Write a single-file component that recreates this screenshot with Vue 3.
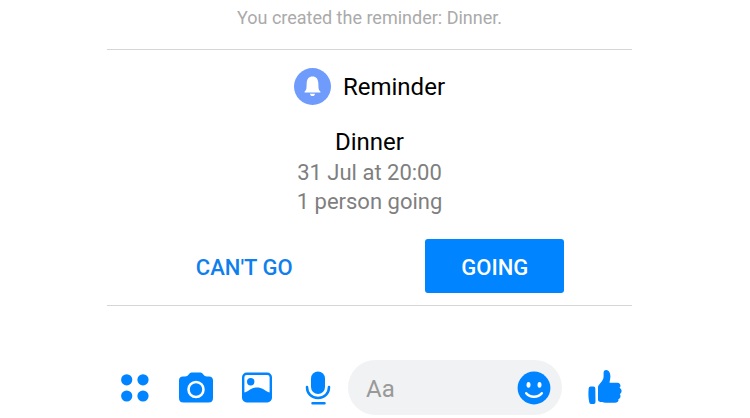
<template>
  <main class="chat">
    <p class="notice">You created the reminder: {{ reminder.title }}.</p>

    <section class="reminder">
      <header class="reminder-header">
        <span class="reminder-badge">
          <svg width="37" height="37" viewBox="0 0 37 37" aria-hidden="true">
            <path d="M18.500 8.500C14.700 8.500 12.900 11.200 12.700 15L12.500 19.500C12.400 21.400 11.900 22.300 10.900 23.200C10.200 23.900 10.500 24.500 11.300 24.500H25.700C26.500 24.500 26.800 23.900 26.100 23.200C25.100 22.300 24.600 21.400 24.500 19.500L24.300 15C24.100 11.200 22.300 8.500 18.500 8.500Z" fill="#fff"/>
            <path d="M16 25.700H21C20.800 27.200 19.900 28 18.500 28S16.200 27.200 16 25.700Z" fill="#fff"/>
          </svg>
        </span>
        <h1 class="reminder-label">Reminder</h1>
      </header>

      <h2 class="reminder-title">{{ reminder.title }}</h2>
      <p class="reminder-detail">{{ reminder.date }}</p>
      <p class="reminder-detail">{{ reminder.going }} person going</p>

      <div class="reminder-actions">
        <button type="button" class="action">CAN'T GO</button>
        <button type="button" class="action primary">GOING</button>
      </div>
    </section>

    <form class="composer" @submit.prevent>
      <div class="tools">
        <button type="button" class="icon-button" aria-label="More">
          <svg width="34" height="36" viewBox="0 0 34 36" fill="currentColor">
            <circle cx="8.700" cy="9.800" r="5.600"/>
            <circle cx="25" cy="9.800" r="5.600"/>
            <circle cx="8.700" cy="26" r="5.600"/>
            <circle cx="25" cy="26" r="5.600"/>
          </svg>
        </button>
        <button type="button" class="icon-button" aria-label="Camera">
          <svg width="34" height="36" viewBox="0 0 34 36">
            <path d="M4 6.500H6C7.800 6.500 8.700 5.800 9.700 4.500C10.700 3.100 11.700 2.500 13.300 2.500H20.700C22.300 2.500 23.300 3.100 24.300 4.500C25.300 5.800 26.200 6.500 28 6.500H30C32.500 6.500 34 8 34 10.500V28C34 31 32.500 32.500 29.500 32.500H4.500C1.500 32.500 0 31 0 28V10.500C0 8 1.500 6.500 4 6.500Z" fill="currentColor"/>
            <circle cx="17" cy="19.500" r="7.500" fill="none" stroke="#fff" stroke-width="2.600"/>
          </svg>
        </button>
        <button type="button" class="icon-button" aria-label="Photos">
          <svg width="34" height="36" viewBox="0 0 34 36">
            <rect x="3.200" y="3.700" width="27.600" height="27.600" rx="3.500" fill="none" stroke="currentColor" stroke-width="2.400"/>
            <circle cx="10.700" cy="11.800" r="3.700" fill="currentColor"/>
            <path d="M3.500 22.500C6 22.500 8 20.800 10.500 19.300C14.500 17 19.500 17 23.500 19.300C26 20.800 28 22.500 30.500 22.500V28C30.500 30 29.500 31 27.500 31H6.500C4.500 31 3.500 30 3.500 28Z" fill="currentColor"/>
          </svg>
        </button>
        <button type="button" class="icon-button" aria-label="Voice message">
          <svg width="34" height="36" viewBox="0 0 34 36">
            <rect x="10" y="1.500" width="14" height="22.500" rx="7" fill="currentColor"/>
            <path d="M6 17C6 23.500 10.500 28 17 28S28 23.500 28 17M11.500 33.200H23.500" fill="none" stroke="currentColor" stroke-width="2.500" stroke-linecap="round"/>
          </svg>
        </button>
      </div>

      <div class="message-box">
        <input v-model="message" type="text" class="message-input" placeholder="Aa" aria-label="Message">
        <button type="button" class="icon-button" aria-label="Emoji">
          <svg width="34" height="34" viewBox="0 0 34 34">
            <circle cx="17" cy="17" r="16.400" fill="currentColor"/>
            <ellipse cx="11.500" cy="13.800" rx="2" ry="2.900" fill="#fff"/>
            <ellipse cx="22.500" cy="13.800" rx="2" ry="2.900" fill="#fff"/>
            <path d="M9.200 22.300C13 27 21 27 24.800 22.300" fill="none" stroke="#fff" stroke-width="2.500" stroke-linecap="round"/>
          </svg>
        </button>
      </div>

      <button type="button" class="icon-button" aria-label="Like">
        <svg width="34" height="36" viewBox="0 0 34 36" fill="currentColor">
          <path d="M2.500 16.500H5.500Q7.300 16.500 7.300 18.300L7.500 32Q7.500 34 5.700 34H3Q1.500 34 1.200 32C.3 27.500 .2 23 .7 18.300Q.9 16.500 2.500 16.500Z"/>
          <path d="M10 17.500C10 15.800 10.700 15 11.800 13.700C14 11.200 15.600 9.500 15.600 6.500V3C15.600 1 16.500 0 18.100 0C21 0 22.400 3.200 22.400 6.500C22.400 8.700 21.700 10.600 21.500 12.700H29.500C32.300 12.700 33.500 16.300 31.500 17.800C34.300 19.300 34.200 22.800 31.800 24C33.200 26.100 32.400 28.500 30.300 29.200C31 31.800 29.500 32.700 26.700 32.700H18C14.500 32.700 12.800 32.300 11 31.500Q10 31 10 29.800Z"/>
        </svg>
      </button>
    </form>
  </main>
</template>

<script setup>
import { ref } from 'vue'

const reminder = {
  title: 'Dinner',
  date: '31 Jul at 20:00',
  going: 1
}

const message = ref('')
</script>

<style>
body {
  margin: 0;
  background: #fff;
}
</style>

<style scoped>
.chat {
  padding: 0 118px 0 107px;
  font-family: Roboto, "Liberation Sans", sans-serif;
  text-align: center;
}

.notice {
  margin: 0;
  padding: 6px 0 19px;
  font-size: 18px;
  line-height: 24px;
  color: #aaa;
}

.reminder {
  padding: 18px 0 12px;
  border-top: 1px solid #d6d6d6;
  border-bottom: 1px solid #d6d6d6;
}

.reminder-header {
  display: flex;
  align-items: center;
  justify-content: center;
  gap: 12px;
  margin-bottom: 21px;
}

.reminder-badge {
  display: flex;
  border-radius: 50%;
  background: #6f9cfc;
}

.reminder-label,
.reminder-title {
  margin: 0;
  font-size: 24px;
  font-weight: 400;
  line-height: 32px;
  color: #000;
}

.reminder-detail {
  margin: 0;
  font-size: 22px;
  line-height: 29px;
  color: #7f7f7f;
}

.reminder-actions {
  display: grid;
  grid-template-columns: 1fr 1fr;
  justify-items: center;
  margin-top: 23px;
  padding: 0 12px;
}

.action {
  height: 54px;
  padding: 2px 36px 0;
  border: 0;
  border-radius: 3px;
  background: none;
  font-family: inherit;
  font-size: 22px;
  font-weight: 500;
  color: #0f7fee;
  cursor: pointer;
}

.action.primary {
  background: #0084ff;
  color: #fff;
}

.composer {
  display: flex;
  align-items: center;
  margin-top: 54px;
  padding: 0 10px 0 11px;
}

.tools {
  display: flex;
  gap: 27px;
}

.icon-button {
  display: flex;
  flex-shrink: 0;
  padding: 0;
  border: 0;
  background: none;
  color: #0084ff;
  cursor: pointer;
}

.message-box {
  display: flex;
  flex: 1;
  align-items: center;
  min-width: 0;
  height: 55px;
  margin: 0 26px 0 13px;
  padding: 0 11px 0 18px;
  border-radius: 28px;
  box-sizing: border-box;
  background: #f1f2f4;
}

.message-input {
  flex: 1;
  min-width: 0;
  padding: 2px 0 0;
  border: 0;
  outline: 0;
  background: none;
  font-family: inherit;
  font-size: 24px;
  color: #000;
}

.message-input::placeholder {
  color: #999;
}
</style>
